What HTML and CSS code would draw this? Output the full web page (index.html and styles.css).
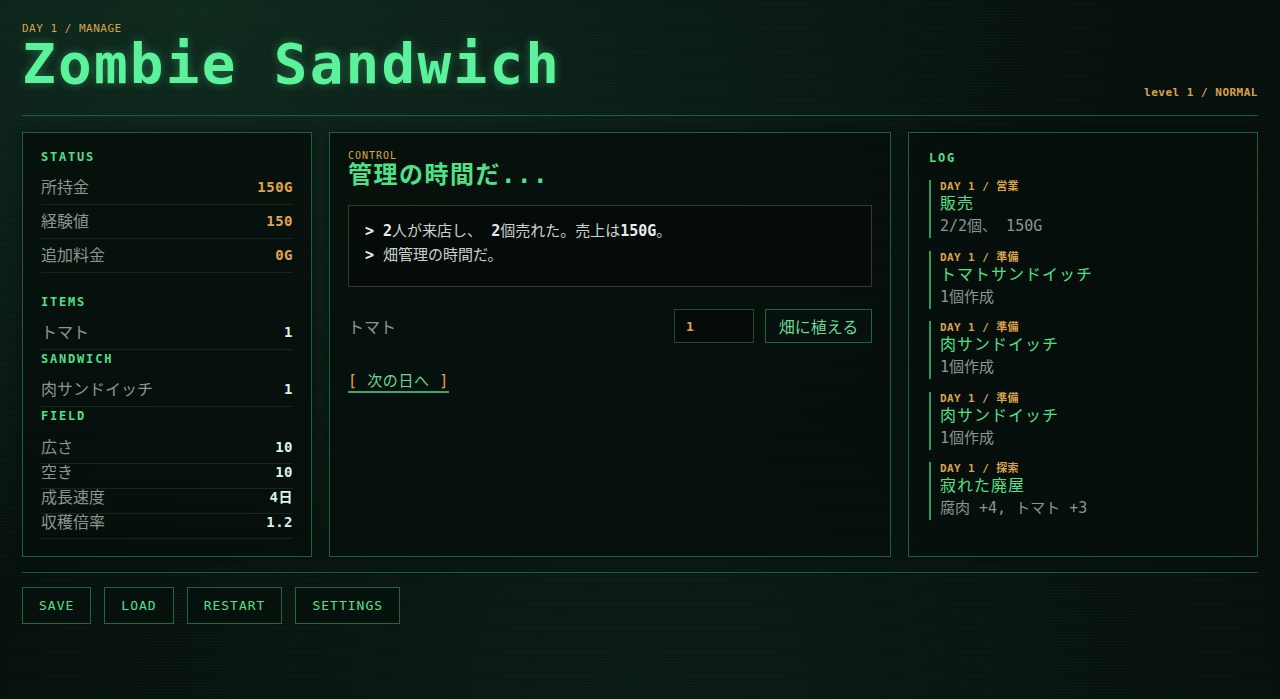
FILE: index.html
```html
<!DOCTYPE html>
<html lang="ja">
<head>
    <meta charset="UTF-8">
    <meta name="viewport" content="width=device-width, initial-scale=1.0">
    <title>Zombie Sandwich</title>
    <link rel="stylesheet" href="styles.css">
</head>
<body>
    <div class="app">
        <!-- title bar -->
        <header class="top">
            <div class="top-left">
                <div class="kicker">DAY 1 / MANAGE</div>
                <h1 class="title">Zombie Sandwich</h1>
            </div>
            <div class="level">level 1 / NORMAL</div>
        </header>

        <main class="board">
            <!-- status side -->
            <section class="panel side">
                <div class="block first">
                    <h2 class="head">STATUS</h2>
                    <div class="row"><span class="key">所持金</span><span class="val gold">150G</span></div>
                    <div class="row"><span class="key">経験値</span><span class="val gold">150</span></div>
                    <div class="row"><span class="key">追加料金</span><span class="val gold">0G</span></div>
                </div>
                <div class="block">
                    <h2 class="head">ITEMS</h2>
                    <div class="row"><span class="key">トマト</span><span class="val">1</span></div>
                </div>
                <div class="block">
                    <h2 class="head">SANDWICH</h2>
                    <div class="row"><span class="key">肉サンドイッチ</span><span class="val">1</span></div>
                </div>
                <div class="block">
                    <h2 class="head field-head">FIELD</h2>
                    <div class="row tight"><span class="key">広さ</span><span class="val">10</span></div>
                    <div class="row tight"><span class="key">空き</span><span class="val">10</span></div>
                    <div class="row tight"><span class="key">成長速度</span><span class="val">4日</span></div>
                    <div class="row tight"><span class="key">収穫倍率</span><span class="val">1.2</span></div>
                </div>
            </section>

            <!-- control -->
            <section class="panel center">
                <div class="small-label">CONTROL</div>
                <h2 class="phase">管理の時間だ...</h2>
                <div class="messages">
                    <p><span class="arrow">&gt;</span> <b>2</b>人が来店し、 <b>2</b>個売れた。売上は<b>150G</b>。</p>
                    <p><span class="arrow">&gt;</span> 畑管理の時間だ。</p>
                </div>
                <div class="plant">
                    <span class="key">トマト</span>
                    <div class="plant-form">
                        <input class="qty" type="text" value="1">
                        <button class="btn plant-btn">畑に植える</button>
                    </div>
                </div>
                <a class="next" href="#"><span class="br">[</span> 次の日へ <span class="br">]</span></a>
            </section>

            <!-- log -->
            <section class="panel log">
                <h2 class="head">LOG</h2>
                <div class="entries">
                    <div class="entry">
                        <div class="entry-tag">DAY 1 / 営業</div>
                        <div class="entry-title">販売</div>
                        <div class="entry-note">2/2個、 150G</div>
                    </div>
                    <div class="entry">
                        <div class="entry-tag">DAY 1 / 準備</div>
                        <div class="entry-title">トマトサンドイッチ</div>
                        <div class="entry-note">1個作成</div>
                    </div>
                    <div class="entry">
                        <div class="entry-tag">DAY 1 / 準備</div>
                        <div class="entry-title">肉サンドイッチ</div>
                        <div class="entry-note">1個作成</div>
                    </div>
                    <div class="entry">
                        <div class="entry-tag">DAY 1 / 準備</div>
                        <div class="entry-title">肉サンドイッチ</div>
                        <div class="entry-note">1個作成</div>
                    </div>
                    <div class="entry">
                        <div class="entry-tag">DAY 1 / 探索</div>
                        <div class="entry-title">寂れた廃屋</div>
                        <div class="entry-note">腐肉 +4, トマト +3</div>
                    </div>
                </div>
            </section>
        </main>

        <footer class="bottom">
            <button class="btn">SAVE</button>
            <button class="btn">LOAD</button>
            <button class="btn">RESTART</button>
            <button class="btn">SETTINGS</button>
        </footer>
    </div>
</body>
</html>
```

FILE: styles.css
```css
/* terminal look: dark green screen, mono font */
html, body {
    margin: 0;
    height: 100%;
}
body {
    background-color: #07100d;
    background-image:
        repeating-linear-gradient(0deg, rgba(120, 255, 180, 0.018) 0 1px, transparent 1px 3px),
        radial-gradient(ellipse at 15% 0%, rgba(30, 90, 60, 0.35), transparent 60%),
        radial-gradient(ellipse at 50% 100%, rgba(20, 60, 40, 0.25), transparent 70%);
    color: #c8d6ce;
    font-family: "DejaVu Sans Mono", "Noto Sans CJK JP", monospace;
    font-size: 14px;
}
.app {
    padding: 22px;
}

/* header */
.top {
    display: flex;
    justify-content: space-between;
    align-items: flex-end;
    padding-bottom: 15px;
    border-bottom: 1px solid #1f5a40;
}
.kicker {
    font-size: 11px;
    line-height: 14px;
    letter-spacing: 0.5px;
    color: #d9a24e;
}
.title {
    margin: 0 0 8px;
    font-size: 56px;
    line-height: 56px;
    letter-spacing: 0.04em;
    color: #5cf29c;
    text-shadow: 0 0 10px rgba(80, 240, 150, 0.35);
}
.level {
    font-size: 11px;
    line-height: 14px;
    letter-spacing: 0.5px;
    font-weight: bold;
    color: #d9a24e;
}

/* three columns */
.board {
    display: grid;
    grid-template-columns: 290px 1fr 350px;
    gap: 17px;
    margin-top: 16px;
}
.panel {
    background: rgba(6, 14, 11, 0.85);
    border: 1px solid #1e5f42;
    box-shadow: 0 0 12px rgba(0, 0, 0, 0.4);
}
.head {
    margin: 0 0 7px;
    font-size: 12px;
    line-height: 14px;
    letter-spacing: 1.8px;
    color: #4fe08a;
}

/* status side */
.side {
    padding: 17px 18px 17px;
}
.block.first {
    margin-bottom: 22px;
}
.block + .block .head {
    margin-top: 2px;
}
.row {
    display: flex;
    justify-content: space-between;
    align-items: center;
    padding: 8px 0;
    line-height: 17px;
    border-bottom: 1px solid #15261e;
}
.row.tight {
    padding: 0 0 7px;
}
.block + .block .field-head {
    margin-bottom: 16px;
}
.key {
    color: #8a968f;
    font-size: 16px;
}
.val {
    font-size: 14px;
    letter-spacing: 0.5px;
    font-weight: bold;
    color: #dcf3e6;
}
.val.gold {
    color: #e0a352;
}

/* control */
.center {
    padding: 17px 18px;
}
.small-label {
    font-size: 10px;
    line-height: 12px;
    letter-spacing: 1px;
    color: #d9a24e;
}
.phase {
    margin: 0 0 17px;
    font-size: 24px;
    line-height: 26px;
    letter-spacing: 1.5px;
    color: #4fe08a;
    font-weight: bold;
}
.messages {
    background: #050b08;
    border: 1px solid #3a3a24;
    padding: 13px 16px 19px;
}
.messages p {
    margin: 0;
    line-height: 24px;
    font-size: 15px;
    color: #c9d3cd;
}
.messages b {
    color: #e4efe8;
}
.arrow {
    font-weight: bold;
    color: #e4efe8;
}
.plant {
    display: flex;
    justify-content: space-between;
    align-items: center;
    margin-top: 22px;
}
.plant-form {
    display: flex;
    gap: 11px;
}
.qty {
    box-sizing: border-box;
    width: 80px;
    height: 34px;
    padding: 0 11px;
    background: #050b08;
    border: 1px solid #1e4c36;
    color: #e0a352;
    font-family: inherit;
    font-size: 13px;
    font-weight: bold;
}
.btn {
    height: 37px;
    padding: 0 16px;
    background: rgba(6, 16, 12, 0.8);
    border: 1px solid #1f6646;
    color: #4fe08a;
    font-family: inherit;
    font-size: 13px;
    letter-spacing: 1px;
    cursor: pointer;
}
.btn:hover {
    background: rgba(40, 120, 80, 0.2);
}
.plant-btn {
    height: 34px;
    width: 107px;
    padding: 0;
    font-size: 16px;
    letter-spacing: 0;
    color: #66d99a;
}
.next {
    display: inline-block;
    margin-top: 28px;
    border-bottom: 2px solid #3aa86c;
    font-size: 15px;
    line-height: 20px;
    letter-spacing: 0.6px;
    color: #66d99a;
    text-decoration: none;
}
.br {
    color: #e0a352;
}

/* log */
.log {
    padding: 18px 20px;
}
.log .head {
    margin-bottom: 15px;
}
.entries {
    display: flex;
    flex-direction: column;
    gap: 12.5px;
}
.entry {
    border-left: 2px solid #2b9a5e;
    padding-left: 9px;
}
.entry-tag {
    font-size: 11px;
    line-height: 14px;
    letter-spacing: 0.4px;
    font-weight: bold;
    color: #d9a24e;
}
.entry-title {
    font-size: 16px;
    line-height: 20px;
    letter-spacing: 1px;
    color: #4fe08a;
}
.entry-note {
    font-size: 15px;
    line-height: 24px;
    color: #8a968f;
}

/* footer buttons */
.bottom {
    display: flex;
    gap: 13px;
    margin-top: 15px;
    padding-top: 14px;
    border-top: 1px solid #1f5a40;
}
```
